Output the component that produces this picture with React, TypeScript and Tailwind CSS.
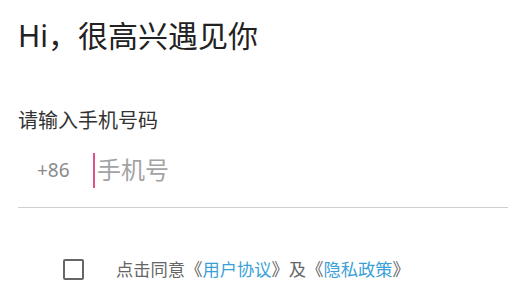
export default function App() {
  return (
    <div
      lang="zh-CN"
      className="flex h-[295px] w-[524px] flex-col bg-white pl-[18px] pr-[16px]"
      style={{ fontFamily: '"Noto Sans", "Noto Sans CJK SC", sans-serif' }}
    >
      {/* Greeting */}
      <h1 className="mt-[17px] text-[30px] leading-[38px] font-normal text-[#222]">
        Hi，很高兴遇见你
      </h1>

      {/* Phone label */}
      <p className="mt-[54px] text-[20px] leading-[24px] text-[#333]">请输入手机号码</p>

      {/* Phone input */}
      <div className="mt-[19px] flex h-[36px] items-center">
        <span className="ml-[19px] w-[56px] text-[19px] text-[#8a8a8a]">+86</span>
        <div className="h-[35px] w-[2px] bg-[#e0508c]" />
        <span className="ml-[2px] text-[24px] leading-[30px] text-[#a3a3a3]">手机号</span>
      </div>
      <div className="mt-[19px] h-px w-[490px] bg-[#cfcfcf]" />

      {/* Agreement */}
      <div className="mt-[50px] flex items-center">
        <div className="ml-[45px] h-[21px] w-[21px] rounded-[2px] border-2 border-[#666]" />
        <p
          className="ml-[32px] text-[17.3px] leading-[22px] text-[#666]"
          style={{ fontFamily: '"Noto Sans CJK SC", sans-serif' }}
        >
          点击同意《<span className="text-[#3b9fd8]">用户协议</span>》及《
          <span className="text-[#3b9fd8]">隐私政策</span>》
        </p>
      </div>
    </div>
  );
}
